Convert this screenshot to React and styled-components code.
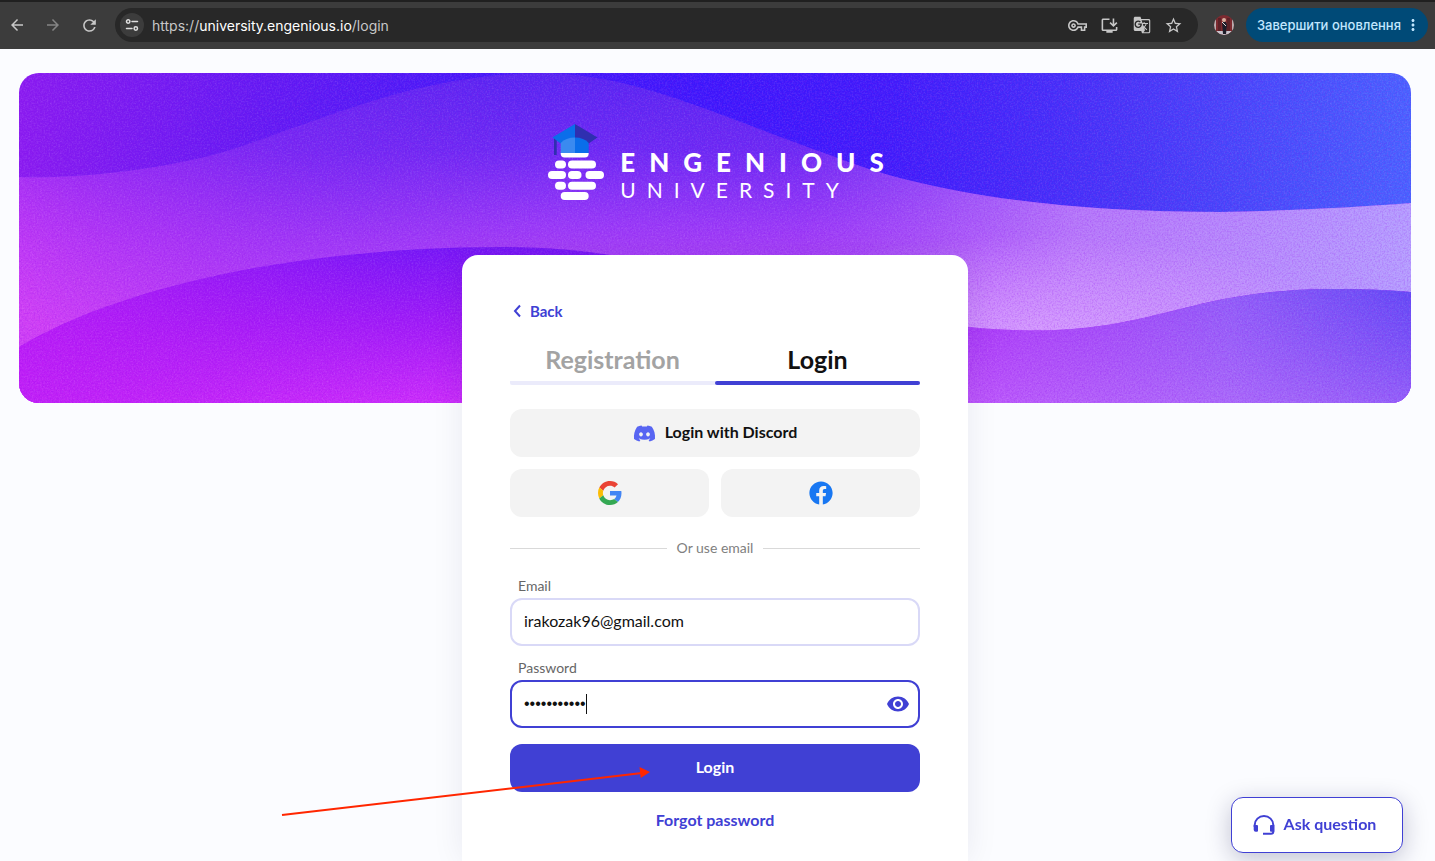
import React from "react";
import styled, { createGlobalStyle } from "styled-components";
import {
  MdArrowBack,
  MdArrowForward,
  MdRefresh,
  MdOutlineVpnKey,
  MdOutlineInstallDesktop,
  MdGTranslate,
  MdStarBorder,
  MdMoreVert,
  MdRemoveRedEye,
} from "react-icons/md";
import { FaDiscord, FaFacebook } from "react-icons/fa";

const INDIGO = "#4040d4";

const GlobalStyle = createGlobalStyle`
  * { box-sizing: border-box; }
  body {
    margin: 0;
    background: #fbfcff;
    font-family: Lato, "Liberation Sans", sans-serif;
    font-size: 16px;
    color: #111;
  }
  button, input { font-family: inherit; font-size: inherit; margin: 0; }
  button { cursor: pointer; border: 0; padding: 0; background: none; color: inherit; }
  a { text-decoration: none; }
  svg { display: block; flex: none; }
`;

const Page = styled.div`
  min-height: 100vh;
  display: flex;
  flex-direction: column;
  overflow: hidden;
`;

/* Browser bar */

const BrowserBar = styled.header`
  display: flex;
  align-items: center;
  height: 49px;
  padding: 0 7px 1px;
  background: #3c3c3c;
  border-top: 2px solid #202020;
  font-family: Inter, "Liberation Sans", sans-serif;
`;

const NavButtons = styled.nav`
  display: flex;
  gap: 16px;
  margin-right: 16px;
`;

const NavButton = styled.button`
  display: grid;
  place-items: center;
  width: 20px;
  height: 20px;
  color: ${(p) => (p.$dim ? "#858585" : "#c7c7c7")};
`;

const AddressBar = styled.div`
  flex: 1;
  display: flex;
  align-items: center;
  height: 34px;
  padding: 0 14px 0 5px;
  border-radius: 17px;
  background: #282828;
  color: #c7c7c7;
`;

const SiteInfo = styled.button`
  display: grid;
  place-items: center;
  width: 24px;
  height: 24px;
  margin-right: 8px;
  border-radius: 50%;
  background: #3c3c3c;
`;

const Url = styled.span`
  flex: 1;
  font-size: 14px;
  color: #c7c7c7;
  b { font-weight: 400; color: #fff; }
`;

const BarIcons = styled.div`
  display: flex;
  gap: 12px;
`;

const Avatar = styled.svg`
  width: 20px;
  height: 20px;
  margin: 0 12px 0 16px;
  border-radius: 50%;
`;

const UpdateButton = styled.button`
  display: flex;
  align-items: center;
  gap: 3px;
  height: 34px;
  padding: 0 6px 0 11px;
  border-radius: 17px;
  background: #004a77;
  color: #c2e7ff;
  font-size: 13px;
  font-weight: 500;
  white-space: nowrap;
`;

/* Banner */

const Main = styled.main`
  flex: 1;
  display: flex;
  flex-direction: column;
  align-items: center;
  padding: 24px 24px 0 19px;
`;

const Banner = styled.section`
  position: relative;
  width: 100%;
  height: 330px;
  padding-top: 51px;
  border-radius: 20px;
  overflow: hidden;
  display: flex;
  justify-content: center;
  align-items: flex-start;
`;

const Waves = styled.svg`
  position: absolute;
  inset: 0;
  width: 100%;
  height: 100%;
`;

const Brand = styled.div`
  position: relative;
  display: flex;
  align-items: flex-end;
  gap: 16px;
  color: #fff;
`;

const BrandText = styled.div`
  display: flex;
  flex-direction: column;
  gap: 4px;
`;

const BrandName = styled.span`
  font-size: 26px;
  line-height: 26px;
  font-weight: 900;
  letter-spacing: 14px;
  margin-right: -16px;
`;

const BrandSub = styled.span`
  font-size: 21px;
  line-height: 22px;
  letter-spacing: 11px;
`;

/* Card */

const Card = styled.section`
  position: relative;
  flex: 1;
  width: 100%;
  max-width: 506px;
  margin-top: -148px;
  padding: 48px 48px 28px;
  border-radius: 16px 16px 0 0;
  background: #fff;
  box-shadow: 0 0 32px rgba(30, 30, 80, 0.08);
  display: flex;
  flex-direction: column;
`;

const BackLink = styled.a`
  display: flex;
  align-items: center;
  align-self: flex-start;
  gap: 8px;
  height: 16px;
  padding-left: 3px;
  font-size: 15px;
  font-weight: 700;
  color: ${INDIGO};
`;

const Tabs = styled.div`
  display: flex;
  margin: 18px 0 24px;
  border-radius: 2px;
  background: linear-gradient(#ebebfb, #ebebfb) bottom / 100% 4px no-repeat;
`;

const Tab = styled.button`
  flex: 1;
  display: flex;
  flex-direction: column;
  align-items: center;
  justify-content: flex-end;
  gap: 7px;
  height: 48px;
  font-size: 25px;
  line-height: 30px;
  font-weight: 700;
  color: ${(p) => (p.$active ? "#111" : "#a3a3a3")};
  &::after {
    content: "";
    align-self: stretch;
    height: 4px;
    border-radius: 2px;
    background: ${(p) => (p.$active ? INDIGO : "transparent")};
  }
`;

const SocialGrid = styled.div`
  display: grid;
  grid-template-columns: 1fr 1fr;
  gap: 12px;
`;

const SocialButton = styled.button`
  grid-column: ${(p) => (p.$wide ? "1 / -1" : "auto")};
  display: flex;
  align-items: center;
  justify-content: center;
  gap: 9px;
  height: 48px;
  border-radius: 12px;
  background: #f3f3f3;
  font-size: 16px;
  font-weight: 700;
`;

const ButtonText = styled.span`
  padding-bottom: 3px;
`;

const Divider = styled.div`
  display: flex;
  align-items: center;
  gap: 10px;
  margin: 21px 0 18px;
  font-size: 14px;
  line-height: 20px;
  color: #808080;
  &::before, &::after {
    content: "";
    flex: 1;
    height: 1px;
    background: #d9d9d9;
  }
`;

const Form = styled.form`
  display: flex;
  flex-direction: column;
  gap: 12px;
`;

const Field = styled.div`
  position: relative;
  display: flex;
  flex-direction: column;
  gap: 2px;
`;

const Label = styled.label`
  padding-left: 8px;
  font-size: 14px;
  line-height: 20px;
  color: #666;
`;

const Input = styled.input`
  width: 100%;
  height: 48px;
  padding: 0 12px 3px;
  border: 2px solid ${(p) => (p.$focused ? INDIGO : "#d9d9f7")};
  border-radius: 12px;
  background: #fff;
  color: #111;
  outline: none;
  &[type="password"] {
    padding-bottom: 0;
    font-family: "Liberation Sans", sans-serif;
  }
`;

const Caret = styled.span`
  position: absolute;
  left: 76px;
  bottom: 14px;
  width: 1px;
  height: 20px;
  background: #111;
`;

const RevealButton = styled.button`
  position: absolute;
  right: 10px;
  bottom: 12px;
  color: ${INDIGO};
`;

const SubmitButton = styled.button`
  display: flex;
  align-items: center;
  justify-content: center;
  height: 48px;
  margin-top: 4px;
  border-radius: 12px;
  background: ${INDIGO};
  color: #fff;
  font-weight: 700;
`;

const ForgotLink = styled.a`
  align-self: center;
  margin-top: 18px;
  line-height: 20px;
  font-weight: 700;
  color: ${INDIGO};
`;

const Pointer = styled.svg`
  position: absolute;
  left: -181px;
  top: 505px;
  overflow: visible;
  pointer-events: none;
`;

const AskButton = styled.button`
  position: fixed;
  right: 32px;
  bottom: 8px;
  display: flex;
  align-items: center;
  justify-content: center;
  gap: 8px;
  width: 172px;
  height: 56px;
  padding-right: 6px;
  border: 1px solid ${INDIGO};
  border-radius: 12px;
  background: #fff;
  box-shadow: 0 6px 24px rgba(20, 20, 70, 0.25);
  color: ${INDIGO};
  font-weight: 700;
`;

const TuneIcon = () => (
  <svg width="14" height="14" viewBox="0 0 14 14" fill="none" stroke="#dedede" strokeWidth="1.5">
    <circle cx="3.2" cy="3.5" r="1.7" />
    <path d="M7 3.5h5.5M1.5 10.5H7" strokeLinecap="round" />
    <circle cx="10.8" cy="10.5" r="1.7" />
  </svg>
);

const GoogleIcon = () => (
  <svg width="24" height="24" viewBox="0 0 48 48">
    <path fill="#EA4335" d="M24 9.5c3.54 0 6.71 1.22 9.21 3.6l6.85-6.85C35.9 2.38 30.47 0 24 0 14.62 0 6.51 5.38 2.56 13.22l7.98 6.19C12.43 13.72 17.74 9.5 24 9.5z" />
    <path fill="#4285F4" d="M46.98 24.55c0-1.57-.15-3.09-.38-4.55H24v9.02h12.94c-.58 2.96-2.26 5.48-4.78 7.18l7.73 6c4.51-4.18 7.09-10.36 7.09-17.65z" />
    <path fill="#FBBC05" d="M10.53 28.59c-.48-1.45-.76-2.99-.76-4.59s.27-3.14.76-4.59l-7.98-6.19C.92 16.46 0 20.12 0 24c0 3.88.92 7.54 2.56 10.78l7.97-6.19z" />
    <path fill="#34A853" d="M24 48c6.48 0 11.93-2.13 15.89-5.81l-7.73-6c-2.15 1.45-4.92 2.3-8.16 2.3-6.26 0-11.57-4.22-13.47-9.91l-7.98 6.19C6.51 42.62 14.62 48 24 48z" />
  </svg>
);

const HeadsetIcon = () => (
  <svg width="24" height="24" viewBox="0 0 24 24" fill="none" stroke="currentColor" strokeWidth="2">
    <path d="M2.700 14v-2a9.300 9 0 0 1 18.600 0v6.500a2.300 2.300 0 0 1-2.300 2.300H11" />
    <path fill="currentColor" stroke="none" d="M1.700 12h3.300a1 1 0 0 1 1 1v4.700a1 1 0 0 1-1 1H3.700a2 2 0 0 1-2-2zM22.300 12H19a1 1 0 0 0-1 1v4.700a1 1 0 0 0 1 1h3.300z" />
  </svg>
);

const LogoMark = () => (
  <svg width="56" height="77" viewBox="0 0 56 77">
    <path fill="#0a6eea" d="M27 0v20H13.500L4.300 13.500z" />
    <path fill="#2f2fb0" d="M27 0l22.500 13.500-8.800 6L27 20z" />
    <path fill="#2f2fb0" d="M6 14.500l2.700 2v14.500H6z" />
    <path fill="#3a8af0" d="M12.700 19q5-5.500 14.300-5.500v16H12.700z" />
    <path fill="#0a6eea" d="M27 13.500q9 0 13.700 5.500v10.500H27z" />
    <path fill="#fff" d="M12.700 29h28v.5q0 4-4 4h-20q-4 0-4-4z" />
    <g fill="#fff">
      <rect x="7" y="36.500" width="11" height="8" rx="4" />
      <rect x="20" y="36.500" width="28" height="8" rx="4" />
      <rect x="0" y="47" width="18" height="8" rx="4" />
      <rect x="20" y="47" width="13.500" height="8" rx="4" />
      <rect x="37.500" y="47" width="18.500" height="8" rx="4" />
      <rect x="7" y="57.700" width="11" height="8" rx="4" />
      <rect x="20" y="57.700" width="28" height="8" rx="4" />
      <rect x="12.700" y="68" width="28" height="8" rx="4" />
    </g>
  </svg>
);

const MID =
  "M0 104C60 106 150 96 211 77C310 45 400 0 530 0C620 4 680 35 811 82C900 118 1030 139 1201 139C1270 138 1340 134 1392 130V330H0Z";
const LOW =
  "M0 274C90 220 260 174 486 174C660 174 760 238 949 254C1130 272 1150 216 1316 216Q1360 216 1392 219V330H0Z";

const BannerArt = () => (
  <Waves viewBox="0 0 1392 330" preserveAspectRatio="none" aria-hidden="true">
    <defs>
      <linearGradient id="top" x1="0" x2="1">
        <stop offset="0" stopColor="#8a1cf0" />
        <stop offset=".16" stopColor="#651af3" />
        <stop offset=".32" stopColor="#451af8" />
        <stop offset=".5" stopColor="#3b17fc" />
        <stop offset=".62" stopColor="#3d1bfb" />
        <stop offset=".8" stopColor="#4438f8" />
        <stop offset="1" stopColor="#4664ff" />
      </linearGradient>
      <linearGradient id="mid" gradientUnits="userSpaceOnUse" x1="0" y1="0" x2="0" y2="255">
        <stop offset="0" stopColor="#5526f2" />
        <stop offset=".3" stopColor="#6a2af4" />
        <stop offset=".65" stopColor="#a03ef8" />
        <stop offset="1" stopColor="#c454fa" />
      </linearGradient>
      <linearGradient id="midLeft" gradientUnits="userSpaceOnUse" x1="90" y1="290" x2="230" y2="60">
        <stop offset="0" stopColor="#d040f5" />
        <stop offset=".5" stopColor="#b030f4" stopOpacity=".75" />
        <stop offset="1" stopColor="#8e26f2" stopOpacity=".6" />
      </linearGradient>
      <linearGradient id="fade" x1="0" x2="1">
        <stop offset="0" stopColor="#fff" />
        <stop offset=".12" stopColor="#fff" stopOpacity=".8" />
        <stop offset=".36" stopColor="#fff" stopOpacity="0" />
      </linearGradient>
      <mask id="leftFade">
        <rect width="1392" height="330" fill="url(#fade)" />
      </mask>
      <linearGradient id="midRight" gradientUnits="userSpaceOnUse" x1="780" y1="0" x2="1392" y2="0">
        <stop offset="0" stopColor="#b068fa" stopOpacity="0" />
        <stop offset=".45" stopColor="#bc86fb" stopOpacity=".85" />
        <stop offset="1" stopColor="#b6a2ff" />
      </linearGradient>
      <radialGradient id="midGlow" gradientUnits="userSpaceOnUse" cx="0" cy="0" r="1" gradientTransform="translate(1020 262) scale(320 100)">
        <stop offset="0" stopColor="#daa6ff" stopOpacity=".85" />
        <stop offset="1" stopColor="#daa6ff" stopOpacity="0" />
      </radialGradient>
      <linearGradient id="low" gradientUnits="userSpaceOnUse" x1="0" y1="174" x2="0" y2="330">
        <stop offset="0" stopColor="#7416f6" />
        <stop offset=".5" stopColor="#a01bf7" />
        <stop offset="1" stopColor="#cc2cfa" />
      </linearGradient>
      <linearGradient id="lowLeft" x1="0" x2="1">
        <stop offset="0" stopColor="#c01cf6" stopOpacity=".8" />
        <stop offset=".28" stopColor="#b01cf6" stopOpacity="0" />
        <stop offset=".6" stopColor="#a838f6" stopOpacity="0" />
        <stop offset=".72" stopColor="#aa46f8" stopOpacity=".85" />
        <stop offset=".87" stopColor="#9060f8" />
        <stop offset="1" stopColor="#624cf6" />
      </linearGradient>
      <linearGradient id="lowRight" gradientUnits="userSpaceOnUse" x1="0" y1="220" x2="0" y2="330">
        <stop offset="0" stopColor="#b868fa" stopOpacity="0" />
        <stop offset="1" stopColor="#c278fc" stopOpacity=".5" />
      </linearGradient>
      <filter id="grain" x="0" y="0" width="100%" height="100%">
        <feTurbulence type="fractalNoise" baseFrequency=".6" numOctaves="2" seed="4" />
        <feColorMatrix values="0 0 0 0 .85  0 0 0 0 .5  0 0 0 0 1  1 0 0 0 -.4" />
      </filter>
      <filter id="grainDark" x="0" y="0" width="100%" height="100%">
        <feTurbulence type="fractalNoise" baseFrequency=".6" numOctaves="2" seed="9" />
        <feColorMatrix values="0 0 0 0 .25  0 0 0 0 0  0 0 0 0 .85  1 0 0 0 -.4" />
      </filter>
    </defs>
    <rect width="1392" height="330" fill="url(#top)" />
    <path d={MID} fill="url(#mid)" />
    <path d={MID} fill="url(#midLeft)" mask="url(#leftFade)" />
    <path d={MID} fill="url(#midRight)" />
    <path d={MID} fill="url(#midGlow)" />
    <path d={LOW} fill="url(#low)" />
    <path d={LOW} fill="url(#lowLeft)" />
    <path d="M940 253C1130 272 1150 216 1316 216Q1360 216 1392 219V330H940Z" fill="url(#lowRight)" />
    <rect width="1392" height="330" filter="url(#grain)" opacity=".35" />
    <rect width="1392" height="330" filter="url(#grainDark)" opacity=".5" />
  </Waves>
);

export default function App() {
  return (
    <Page>
      <GlobalStyle />
      <BrowserBar>
        <NavButtons>
          <NavButton aria-label="Previous page"><MdArrowBack size={18} /></NavButton>
          <NavButton aria-label="Next page" $dim><MdArrowForward size={18} /></NavButton>
          <NavButton aria-label="Reload"><MdRefresh size={19} /></NavButton>
        </NavButtons>
        <AddressBar>
          <SiteInfo aria-label="Site information"><TuneIcon /></SiteInfo>
          <Url>https://<b>university.engenious.io</b>/login</Url>
          <BarIcons>
            <NavButton aria-label="Passwords"><MdOutlineVpnKey size={19} /></NavButton>
            <NavButton aria-label="Install"><MdOutlineInstallDesktop size={19} /></NavButton>
            <NavButton aria-label="Translate"><MdGTranslate size={18} /></NavButton>
            <NavButton aria-label="Bookmark"><MdStarBorder size={19} /></NavButton>
          </BarIcons>
        </AddressBar>
        <Avatar viewBox="0 0 20 20" aria-hidden="true">
          <rect width="20" height="20" fill="#7d2a30" />
          <path fill="#b9aeb0" d="M0 4h2v12H0zM18 4h2v12h-2z" />
          <path fill="#5c2228" d="M4 3h3v13H4zM13 3h3v13h-3z" />
          <path fill="#c9c4cc" d="M2 16h16l-4 4H6z" />
          <path fill="#1c1c28" d="M8 7h4l1 3-1 9H9z" />
          <circle cx="10" cy="5" r="2" fill="#d8b0a0" />
          <path stroke="#e6d8d8" strokeWidth="1" d="M8 7l4 4" />
        </Avatar>
        <UpdateButton>
          Завершити оновлення
          <MdMoreVert size={18} />
        </UpdateButton>
      </BrowserBar>

      <Main>
        <Banner>
          <BannerArt />
          <Brand>
            <LogoMark />
            <BrandText>
              <BrandName>ENGENIOUS</BrandName>
              <BrandSub>UNIVERSITY</BrandSub>
            </BrandText>
          </Brand>
        </Banner>

        <Card>
          <BackLink href="#back">
            <svg width="9" height="14" viewBox="0 0 9 14" fill="none" stroke="currentColor" strokeWidth="2">
              <path d="M7 1.500 2 7l5 5.500" />
            </svg>
            Back
          </BackLink>
          <Tabs role="tablist">
            <Tab role="tab" aria-selected="false">Registration</Tab>
            <Tab role="tab" aria-selected="true" $active>Login</Tab>
          </Tabs>
          <SocialGrid>
            <SocialButton $wide>
              <FaDiscord size={23} color="#5865f2" />
              <ButtonText>Login with Discord</ButtonText>
            </SocialButton>
            <SocialButton aria-label="Google"><GoogleIcon /></SocialButton>
            <SocialButton aria-label="Facebook"><FaFacebook size={24} color="#1877f2" /></SocialButton>
          </SocialGrid>
          <Divider>Or use email</Divider>
          <Form onSubmit={(e) => e.preventDefault()}>
            <Field>
              <Label htmlFor="email">Email</Label>
              <Input id="email" type="email" defaultValue="irakozak96@gmail.com" />
            </Field>
            <Field>
              <Label htmlFor="password">Password</Label>
              <Input id="password" type="password" defaultValue="abcdefghijk" $focused />
              <Caret />
              <RevealButton type="button" aria-label="Show password"><MdRemoveRedEye size={24} /></RevealButton>
            </Field>
            <SubmitButton type="submit"><ButtonText>Login</ButtonText></SubmitButton>
          </Form>
          <ForgotLink href="#forgot">Forgot password</ForgotLink>
          <Pointer width="370" height="60" viewBox="0 0 370 60" aria-hidden="true">
            <path d="M1 55 361 13" stroke="#ff2600" strokeWidth="2" />
            <path d="M369 12 358.500 7l1.200 11z" fill="#ff2600" />
          </Pointer>
        </Card>
      </Main>

      <AskButton>
        <HeadsetIcon />
        <ButtonText>Ask question</ButtonText>
      </AskButton>
    </Page>
  );
}
